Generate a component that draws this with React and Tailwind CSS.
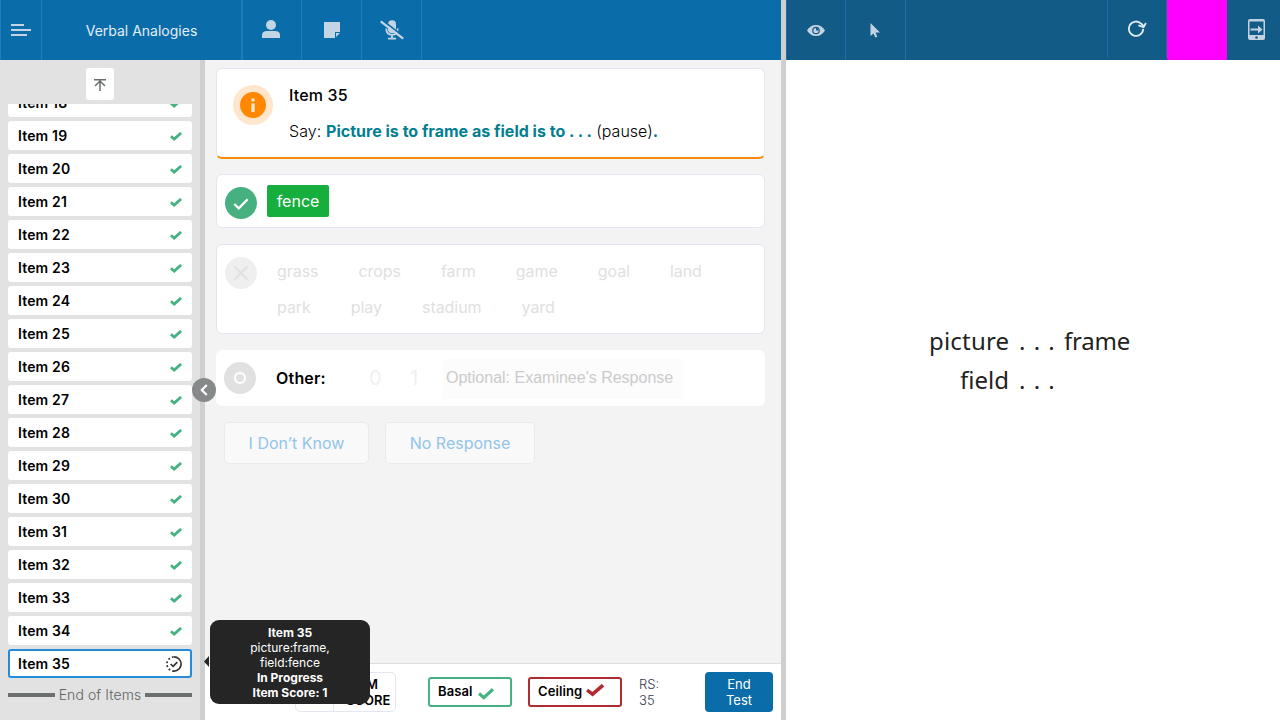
import React from "react";

const items = [18, 19, 20, 21, 22, 23, 24, 25, 26, 27, 28, 29, 30, 31, 32, 33, 34];

function Tick({ className }) {
  return (
    <svg className={className} viewBox="0 0 12 9" fill="none" stroke="currentColor" strokeWidth="2.7">
      <path d="M0.9 4.2 4.2 7.1 11.1 0.9" />
    </svg>
  );
}

function ItemRow({ n }) {
  return (
    <div className="flex h-[29px] shrink-0 items-center justify-between rounded-[3px] bg-white pl-[10px] pr-[10px] text-[14px] font-semibold text-black">
      <span className="tracking-[0.15px]">Item {n}</span>
      <Tick className="mt-px h-[9px] w-3 text-[#46b283]" />
    </div>
  );
}

function ExaminerBar() {
  return (
    <header className="flex h-[60px] shrink-0 bg-[#0a6ca9] text-[#c3d5e4]">
      <div className="flex w-[42px] items-center border-x border-[#237dba] pl-[10px]">
        <svg className="h-3 w-5" viewBox="0 0 20 12" fill="currentColor">
          <path d="M0 0h13v2H0zM0 5h20v2H0zM0 10h16v2H0z" />
        </svg>
      </div>
      <div className="flex w-[201px] items-center justify-center border-r-2 border-[#1f7ab8] pt-px text-[14px] text-[#e3edf5]">
        <span>Verbal Analogies</span>
      </div>
      <div className="flex w-[59px] items-center justify-center border-r border-[#237dba] pr-[2px]">
        <svg className="mb-[2px] h-[18px] w-[18px]" viewBox="0 0 18 18" fill="currentColor">
          <circle cx="9" cy="5" r="5" />
          <path d="M0 18v-3c0-2.6 2-4 5-4h8c3 0 5 1.4 5 4v3z" />
        </svg>
      </div>
      <div className="flex w-[60px] items-center justify-center border-r border-[#237dba]">
        <svg className="h-4 w-4" viewBox="0 0 16 16" fill="currentColor">
          <path d="M0 0h16v10h-5v6H0zM12 11h4l-4 4z" />
        </svg>
      </div>
      <div className="flex w-[60px] items-center justify-center border-r border-[#237dba]">
        <svg className="h-5 w-6" viewBox="0 0 24 20" fill="none" stroke="currentColor">
          <rect x="8" y="0.3" width="8" height="13" rx="4" fill="currentColor" stroke="none" />
          <path d="M6.3 8.5c0 4 2.3 6.3 5.7 6.3s5.7-2.3 5.7-6.3M12 15v3M8 18.6h8" strokeWidth="1.8" />
          <path d="M2 0 24 16.8" stroke="#0a6ca9" strokeWidth="1.8" />
          <path d="M0.7 1.4 23.2 18.6" strokeWidth="2.3" />
        </svg>
      </div>
    </header>
  );
}

function Sidebar() {
  return (
    <aside className="flex w-[200px] shrink-0 flex-col bg-[#e2e2e2] px-2">
      <div className="flex h-11 shrink-0 justify-center pt-2">
        <div className="flex h-8 w-7 items-center justify-center rounded-[3px] bg-white">
          <svg className="mt-px h-3 w-3" viewBox="0 0 12 12" fill="none" stroke="#696d6d" strokeWidth="1.5">
            <path d="M0 .75h12M6 12V2M1 7l5-5 5 5" />
          </svg>
        </div>
      </div>
      <div className="flex h-[574px] shrink-0 flex-col justify-end gap-1 overflow-hidden">
        {items.map((n) => (
          <ItemRow key={n} n={n} />
        ))}
        <div className="flex h-[29px] shrink-0 items-center justify-between rounded-[3px] border-2 border-[#268bd8] bg-white px-2 text-[14px] font-semibold text-black">
          <span className="tracking-[0.15px]">Item 35</span>
          <svg className="h-4 w-4" viewBox="0 0 16 16" fill="none" stroke="#333" strokeWidth="1.7">
            <path d="M8 .9a7.1 7.1 0 0 1 0 14.2" />
            <path d="M8 15.1A7.1 7.1 0 0 1 8 .9" strokeDasharray="1.8 2.2" />
            <path d="m4.6 8 2.5 2.4 4.2-4.3" />
          </svg>
        </div>
      </div>
      <div className="mt-[7px] flex h-5 items-center justify-between text-[14px] text-[#6b6f6f]">
        <span className="h-1 w-[47px] bg-[#6b6f6f]" />
        <span className="-mt-[2px] font-light tracking-[0.1px] text-[#5f6363]">End of Items</span>
        <span className="h-1 w-[47px] bg-[#6b6f6f]" />
      </div>
    </aside>
  );
}

function Words({ words }) {
  return (
    <div className="flex h-9 items-center gap-10 tracking-[-0.05px]">
      {words.map((w) => (
        <span key={w}>{w}</span>
      ))}
    </div>
  );
}

function Content() {
  return (
    <main className="flex flex-1 flex-col pl-[11px] pr-4 pt-2 text-[16px]">
      <section className="flex h-[91px] rounded-[6px] border border-b-2 border-[#e3e7f2] border-b-[#ff8a05] bg-white pl-4 pt-4">
        <div className="flex h-10 w-10 items-center justify-center rounded-full bg-[#ffe6cc]">
          <div className="flex h-[26px] w-[26px] items-center justify-center rounded-full bg-[#ff8800]">
            <svg className="h-[14px] w-1" viewBox="0 0 4 14" fill="#ffe6cc">
              <circle cx="2" cy="2" r="1.8" />
              <path d="M.3 5.3h3.4V14H.3z" />
            </svg>
          </div>
        </div>
        <div className="-mt-px ml-4 text-black">
          <p className="h-[23px] font-medium leading-[22px] tracking-[0.15px]">Item 35</p>
          <p className="mt-[12px] leading-6">
            <span className="font-light tracking-[0.1px]">Say: </span>
            <b className="tracking-[0.01px] text-[#037f91]">Picture is to frame as field is to . . .</b>
            <span className="font-light"> (pause)</span>
            <b className="text-[#037f91]">.</b>
          </p>
        </div>
      </section>

      <section className="mt-[15px] flex h-[54px] rounded-[6px] border border-[#e3e7f2] bg-white pl-2 pt-[10px]">
        <div className="mt-[2px] flex h-8 w-8 items-center justify-center rounded-full bg-[#46b080]">
          <svg className="mt-[2px] h-3 w-4" viewBox="0 0 16 12" fill="none" stroke="#fff" strokeWidth="2.3">
            <path d="m1.3 6 4.5 4.4L14.6 1.3" />
          </svg>
        </div>
        <div className="ml-[10px] flex h-8 w-[62px] items-center justify-center rounded-[2px] bg-[#16ae3c] text-white">fence</div>
      </section>

      <section className="mt-4 flex h-[90px] rounded-[6px] border border-[#e1e6f1] bg-white pl-2 pt-2 text-[#e0e0e0]">
        <div className="mt-1 flex h-8 w-8 items-center justify-center rounded-full bg-[#efefef]">
          <svg className="h-[14px] w-[14px]" viewBox="0 0 14 14" fill="none" stroke="#dfdfdf" strokeWidth="1.8">
            <path d="m.7.7 12.6 12.6M13.3.7.7 13.3" />
          </svg>
        </div>
        <div className="ml-5">
          <Words words={["grass", "crops", "farm", "game", "goal", "land"]} />
          <Words words={["park", "play", "stadium", "yard"]} />
        </div>
      </section>

      <section className="mt-4 flex h-14 items-center rounded-[6px] bg-white pl-2">
        <div className="flex h-8 w-8 items-center justify-center rounded-full bg-[#e1e1e1]">
          <div className="h-3 w-3 rounded-full border-[2.5px] border-white" />
        </div>
        <span className="ml-5 w-[93px] font-semibold tracking-[0.2px] text-black">Other:</span>
        <span className="w-[41px] text-[20px] text-[#f0f0f0]">0</span>
        <span className="w-[33px] text-[20px] text-[#f0f0f0]">1</span>
        <div className="mt-px h-10 w-[241px] bg-[#fcfcfc] pl-[3px] font-['Liberation_Sans',Arial,sans-serif] leading-[38px] text-[#cbcbcb]">
          Optional: Examinee's Response
        </div>
      </section>

      <div className="mt-4 flex gap-4 pl-2 text-[#93c4e9]">
        <div className="flex h-[42px] w-[145px] items-center justify-center rounded-[5px] border border-[#ebebeb] bg-[#f9f9f9]">I Don’t Know</div>
        <div className="flex h-[42px] w-[150px] items-center justify-center rounded-[5px] border border-[#ebebeb] bg-[#f9f9f9]">No Response</div>
      </div>
    </main>
  );
}

function Footer() {
  return (
    <footer className="flex h-[57px] shrink-0 border-t border-[#dedede] bg-white pl-[90px] pt-2 text-black">
      <div className="flex h-10 w-[101px] overflow-hidden rounded-[5px] border border-[#e3e7f2]">
        <div className="w-[38px] border-r border-[#e3e7f2]" />
        <div className="pl-3 pt-[3px] text-[13px] font-semibold leading-4">
          ITEM
          <br />
          SCORE
        </div>
      </div>
      <div className="ml-8 mt-[5px] flex h-[30px] w-[84px] items-center rounded-[3px] border-2 border-[#46b283] pl-2 text-[13px] font-semibold tracking-[0.1px]">
        Basal
        <svg className="ml-[5px] mt-[3px] h-3 w-4" viewBox="0 0 16 12" fill="none" stroke="#46b283" strokeWidth="3.2">
          <path d="m1 5.5 4.8 4.2L15 1.2" />
        </svg>
      </div>
      <div className="ml-4 mt-[5px] flex h-[30px] w-[94px] items-center rounded-[3px] border-2 border-[#b02c31] pl-2 text-[13px] font-semibold tracking-[0.1px]">
        Ceiling
        <svg className="mb-[3px] ml-1 h-[13px] w-[18px]" viewBox="0 0 18 13" fill="none" stroke="#b02c31" strokeWidth="3.6">
          <path d="m1 6.1 5.6 4.1L17 1.2" />
        </svg>
      </div>
      <div className="ml-[17px] mt-1 w-[66px] text-[13px] font-light leading-4 text-[#333b4a]">
        RS:
        <br />
        35
      </div>
      <div className="flex h-10 w-[68px] items-center justify-center rounded-[4px] bg-[#0a6ca9] text-center text-[13px] leading-4 text-white">
        End
        <br />
        Test
      </div>
    </footer>
  );
}

function Tooltip() {
  return (
    <div className="absolute left-[210px] top-[620px] flex h-[84px] w-40 flex-col justify-center rounded-[9px] bg-[#252525] text-center text-[12px] leading-[15px] text-white">
      <svg className="absolute -left-[6px] top-[36px] h-[11px] w-[5px]" viewBox="0 0 5 11" fill="#252525">
        <path d="M5 0v11L0 5.5z" />
      </svg>
      <b>Item 35</b>
      <span>picture:frame,</span>
      <span>field:fence</span>
      <b>In Progress</b>
      <b>Item Score: 1</b>
    </div>
  );
}

function ExamineeView() {
  return (
    <div className="flex flex-1 flex-col bg-white">
      <header className="flex h-[60px] shrink-0 bg-[#125b86] text-[#c3d1e1]">
        <div className="flex w-[60px] items-center justify-center border-x border-[#1d70a8]">
          <svg className="h-[11px] w-[18px]" viewBox="0 0 18 11">
            <path d="M0 5.5C2 2 5 0 9 0s7 2 9 5.5C16 9 13 11 9 11S2 9 0 5.5z" fill="currentColor" />
            <circle cx="9" cy="5.5" r="3.8" fill="#125b86" />
            <circle cx="9" cy="5.5" r="2.6" fill="currentColor" />
            <path d="M9 3v2.6h2.6A2.6 2.6 0 0 0 9 3z" fill="#125b86" />
          </svg>
        </div>
        <div className="flex w-[60px] items-center justify-center border-r border-[#1d70a8] pr-px">
          <svg className="h-[15px] w-[10px]" viewBox="0 0 10 15" fill="currentColor">
            <path d="M.5 0v13l3-2.6L5.3 14.6l2-.8L5.6 9.6H10z" />
          </svg>
        </div>
        <div className="flex-1" />
        <div className="flex h-[57px] w-[60px] items-center justify-center border-x border-[#1d70a8]">
          <svg className="mt-[1px] h-[18px] w-[20px]" viewBox="0 0 20 18" fill="none" stroke="#e0eaf3" strokeWidth="1.8">
            <path d="M16.2 8.9a7.2 7.2 0 1 1-2-5.2l2.3 2.3" />
            <path d="m11.4 5.4 5.2 1.8 2.3-4.2" />
          </svg>
        </div>
        <div className="w-[60px] bg-[#ff00ff]" />
        <div className="flex w-[53px] items-center pb-px pl-[21px]">
          <svg className="h-[21px] w-[17px]" viewBox="0 0 17 21">
            <rect width="17" height="21" rx="2" fill="currentColor" />
            <path d="M1.5 2.5h14v13.5h-14z" fill="#125b86" />
            <path d="M2.5 9.6h7.5V6.6l4.5 3.9-4.5 3.9v-3H2.5z" fill="currentColor" />
            <circle cx="8.5" cy="18.5" r="1.3" fill="#125b86" />
          </svg>
        </div>
      </header>
      <div className="flex flex-1 flex-col items-start pl-[143px] pt-[261px] font-['Noto_Sans',sans-serif] text-[24px] leading-[39px] text-[#222]">
        <div className="flex">
          <span className="w-[90px] tracking-[0.2px]">picture</span>
          <span className="w-[45px] tracking-[1px]">. . .</span>
          <span className="tracking-[-0.2px]">frame</span>
        </div>
        <div className="flex pl-[31px]">
          <span className="w-[59px]">field</span>
          <span className="tracking-[1px]">. . .</span>
        </div>
      </div>
    </div>
  );
}

export default function App() {
  return (
    <div className="relative flex h-[720px] w-[1280px] overflow-hidden bg-[#f3f3f3] font-['Inter',sans-serif]">
      <div className="flex w-[781px] shrink-0 flex-col">
        <ExaminerBar />
        <div className="flex min-h-0 flex-1">
          <Sidebar />
          <div className="w-[5px] shrink-0 bg-[#cfcfcf]" />
          <div className="flex flex-1 flex-col">
            <Content />
            <Footer />
          </div>
        </div>
      </div>
      <div className="w-[5px] shrink-0 bg-[#cfcfcf]" />
      <ExamineeView />
      <div className="absolute left-[192px] top-[378px] flex h-6 w-6 items-center justify-center rounded-full bg-[#868989]">
        <svg className="h-3 w-2" viewBox="0 0 8 12" fill="none" stroke="#fff" strokeWidth="2.2">
          <path d="M6.8 1 1.8 6l5 5" />
        </svg>
      </div>
      <Tooltip />
    </div>
  );
}
